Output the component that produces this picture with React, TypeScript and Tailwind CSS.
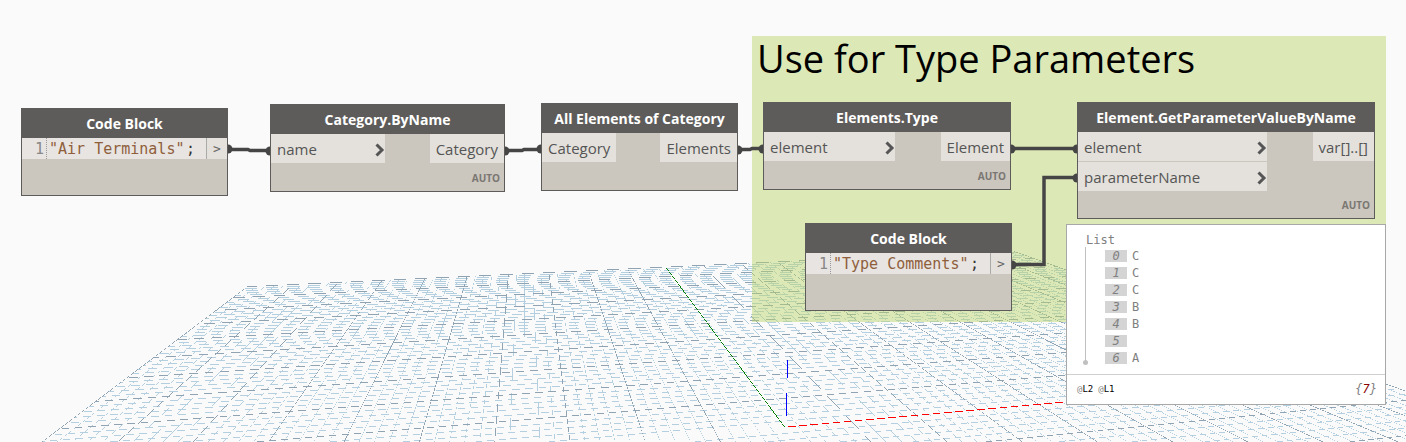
import type { ReactNode } from "react"

// Perspective of the background plane: t runs along the red axis, s along the green one.
// One unit is a major cell, the origin sits at t = 0, s = 10.
function project(t: number, s: number) {
  const w = 1 + 0.00954 * t - 0.0457 * s
  return {
    x: (666 + 44.26 * t - 23.97 * s) / w,
    y: (267 + 0.77 * t - 3.51 * s) / w,
  }
}

type Point = { x: number; y: number }

// Unsmoothed stippled line: only pixels close to the true line are set
function stipple(a: Point, b: Point, reach: number) {
  let d = ""
  const flat = Math.abs(b.x - a.x) > Math.abs(b.y - a.y)
  const [p, q] = flat ? (a.x < b.x ? [a, b] : [b, a]) : a.y < b.y ? [a, b] : [b, a]
  const from = Math.ceil(flat ? p.x : p.y)
  const to = Math.floor(flat ? q.x : q.y)
  const slope = flat ? (q.y - p.y) / (q.x - p.x) : (q.x - p.x) / (q.y - p.y)
  let start = -1
  let level = 0
  for (let i = Math.max(from, 0); i <= Math.min(to, 2000); i++) {
    const v = flat ? p.y + (i - p.x) * slope : p.x + (i - p.y) * slope
    const cell = Math.floor(v)
    const on = Math.abs(v - cell - 0.5) < reach
    if (start >= 0 && (!on || cell !== level)) {
      d += flat ? `M${start} ${level}.5H${i}` : `M${level}.5 ${start}V${i}`
      start = -1
    }
    if (on && start < 0) {
      start = i
      level = cell
    }
  }
  if (start >= 0) {
    const end = Math.min(to, 2000)
    d += flat ? `M${start} ${level}.5H${end}` : `M${level}.5 ${start}V${end}`
  }
  return d
}

function buildGrid() {
  let minor = ""
  let major = ""
  for (let i = -50; i <= 50; i++) {
    if (i === 0) continue
    const isMajor = i % 5 === 0
    const d = stipple(project(i / 5, 0), project(i / 5, 13), isMajor ? 0.32 : 0.24)
    if (isMajor) major += d
    else minor += d
  }
  for (let j = 0; j <= 65; j++) {
    if (j === 50) continue
    const d = stipple(project(-10, j / 5), project(10, j / 5), 0.29)
    if (j % 5 === 0) major += d
    else minor += d
  }
  return { minor, major }
}

const GRID = buildGrid()
const GREEN_AXIS = stipple(project(0, 0), project(0, 10), 0.4)
const RED_AXIS = stipple(project(0, 10), project(10, 10), 0.34)

function Background() {
  return (
    <svg className="absolute inset-0 h-full w-full" fill="none" shapeRendering="crispEdges" aria-hidden="true">
      <path d={GRID.minor} stroke="#b4d0e0" />
      <path d={GRID.major} stroke="#8fa3b2" />
      <path d={GREEN_AXIS} stroke="#008000" />
      <path d={RED_AXIS} stroke="#ff0000" />
      <path d="M787.5 360V378" stroke="#0000ff" />
      <path d="M786.5 393V416" stroke="#0000ff" />
    </svg>
  )
}

const WIRES = [
  "M228 149.5H248L250 150.5H270",
  "M505 150.5H522L524 149.5H541",
  "M738 149.5H750L752 148.5H763",
  "M1011 148.5H1077",
  "M1012 264.5H1044V177.5H1077",
]

const WIRE_ENDS = [
  [228, 149], [270, 151], [505, 151], [541, 149], [738, 150], [763, 149],
  [1011, 149], [1077, 149], [1012, 265], [1077, 178],
]

function Wires() {
  return (
    <svg className="absolute inset-0 h-full w-full" fill="none" aria-hidden="true">
      {WIRES.map((d) => (
        <path key={d} d={d} stroke="#454545" strokeWidth="3.5" />
      ))}
      {WIRE_ENDS.map(([x, y]) => (
        <circle key={`${x}-${y}`} cx={x} cy={y} r="4.5" fill="#454545" />
      ))}
    </svg>
  )
}

function Node({ title, className, children }: { title: string; className: string; children: ReactNode }) {
  return (
    <section className={`absolute flex flex-col border border-[#5e5c5a] bg-[#cbc6be] ${className}`}>
      <h2 className="flex h-[29px] shrink-0 items-center justify-center bg-[#5e5c5a] text-[14px] font-bold whitespace-nowrap text-white">
        {title}
      </h2>
      {children}
    </section>
  )
}

function Chevron() {
  return (
    <svg width="10" height="14" viewBox="0 0 10 14" fill="none" stroke="#555" strokeWidth="3" aria-hidden="true">
      <path d="M1.5 1.5L7 7L1.5 12.5" />
    </svg>
  )
}

function InPort({ name, chevron = true }: { name: string; chevron?: boolean }) {
  return (
    <button type="button" className="flex h-[29px] w-full items-center justify-between bg-[#e4e1dc] pt-0.5 pl-1.5 text-left">
      {name}
      {chevron && <Chevron />}
    </button>
  )
}

function OutPort({ name }: { name: string }) {
  return (
    <button type="button" className="flex h-[29px] items-center bg-[#e4e1dc] px-1.5 pt-0.5">
      {name}
    </button>
  )
}

function Auto() {
  return <span className="mt-auto pr-1 pb-1.5 text-right text-[10px] leading-[14px] font-bold text-[#7a7772]">AUTO</span>
}

function CodeBlock({ id, code, className }: { id: string; code: string; className: string }) {
  return (
    <Node title="Code Block" className={className}>
      <div className="flex h-[21px] font-['DejaVu_Sans_Mono',monospace] text-[15px] leading-[22px]">
        <label htmlFor={id} className="w-[25px] border-r border-dotted border-[#999] bg-[#e8e4e1] pr-0.5 text-right text-[#888]">
          1
        </label>
        <div className="flex min-w-0 flex-1 bg-[#e8e4e1] pl-0.5">
          <input
            id={id}
            defaultValue={code}
            spellCheck={false}
            className="h-[22px] w-[137px] bg-transparent text-[#8f5f3c] outline-none"
          />
          <span className="text-[#333]">;</span>
        </div>
        <button type="button" className="w-[21px] border-l border-[#aaa] bg-[#e4e1dc] text-[13px] leading-5 text-[#666]">
          &gt;
        </button>
      </div>
    </Node>
  )
}

const VALUES = ["C", "C", "C", "B", "B", "", "A"]

function Preview() {
  return (
    <section className="absolute top-[224px] left-[1066px] w-[320px] border border-[#a8a8a8] bg-white font-['DejaVu_Sans_Mono',monospace] text-[12px] text-[#808080]">
      <div className="h-[149px] px-[18px] pt-2">
        <h3 className="h-[14px] pl-px leading-[15px]">List</h3>
        <div className="relative h-[116px] border-l border-[#c0c0c0] pl-[19px]">
          <ol>
            {VALUES.map((value, i) => (
              <li key={i} className="flex h-[17px] items-center gap-[5px]">
                <span className="h-3 w-[22px] bg-[#d4d4d4] text-center leading-3 italic">{i}</span>
                {value}
              </li>
            ))}
          </ol>
          <span className="absolute -bottom-0.5 -left-[3px] size-[5px] rounded-full bg-[#c0c0c0]" />
        </div>
      </div>
      <footer className="flex h-[30px] items-center justify-between border-t border-[#d0d0d0] pr-2 pl-2.5">
        <span className="flex gap-[5px] text-[9px] text-black">
          <span><span className="text-[#888]">@</span>L2</span>
          <span><span className="text-[#888]">@</span>L1</span>
        </span>
        <span className="pb-0.5 italic">
          {"{"}<span className="text-[#8b0000]">7</span>{"}"}
        </span>
      </footer>
    </section>
  )
}

export default function App() {
  return (
    <main className="relative h-screen w-full overflow-hidden bg-[#fafafa] font-['Open_Sans',sans-serif] text-[15px] text-[#555]">
      <Background />

      {/* Group note */}
      <section className="absolute top-9 left-[752px] h-[286px] w-[634px] bg-[#bbd468]/46 px-[5px]">
        <h1 className="text-[38px] leading-[44px] whitespace-nowrap text-black">Use for Type Parameters</h1>
      </section>

      <Wires />

      <CodeBlock id="category-name" code={'"Air Terminals"'} className="top-[108px] left-[21px] h-[88px] w-[207px]" />

      <Node title="Category.ByName" className="top-[104px] left-[270px] h-[88px] w-[235px]">
        <div className="flex items-start justify-between">
          <div className="w-[114px]"><InPort name="name" /></div>
          <OutPort name="Category" />
        </div>
        <Auto />
      </Node>

      <Node title="All Elements of Category" className="top-[103px] left-[541px] h-[88px] w-[197px]">
        <div className="flex items-start justify-between">
          <div className="w-[74px]"><InPort name="Category" chevron={false} /></div>
          <OutPort name="Elements" />
        </div>
      </Node>

      <Node title="Elements.Type" className="top-[102px] left-[763px] h-[88px] w-[248px]">
        <div className="flex items-start justify-between">
          <div className="w-[131px]"><InPort name="element" /></div>
          <OutPort name="Element" />
        </div>
        <Auto />
      </Node>

      <Node title="Element.GetParameterValueByName" className="top-[102px] left-[1077px] h-[117px] w-[298px]">
        <div className="flex items-start justify-between">
          <div className="flex w-[189px] flex-col gap-px">
            <InPort name="element" />
            <InPort name="parameterName" />
          </div>
          <OutPort name="var[]..[]" />
        </div>
        <Auto />
      </Node>

      <CodeBlock id="parameter-name" code={'"Type Comments"'} className="top-[223px] left-[805px] h-[88px] w-[207px]" />

      <Preview />
    </main>
  )
}
